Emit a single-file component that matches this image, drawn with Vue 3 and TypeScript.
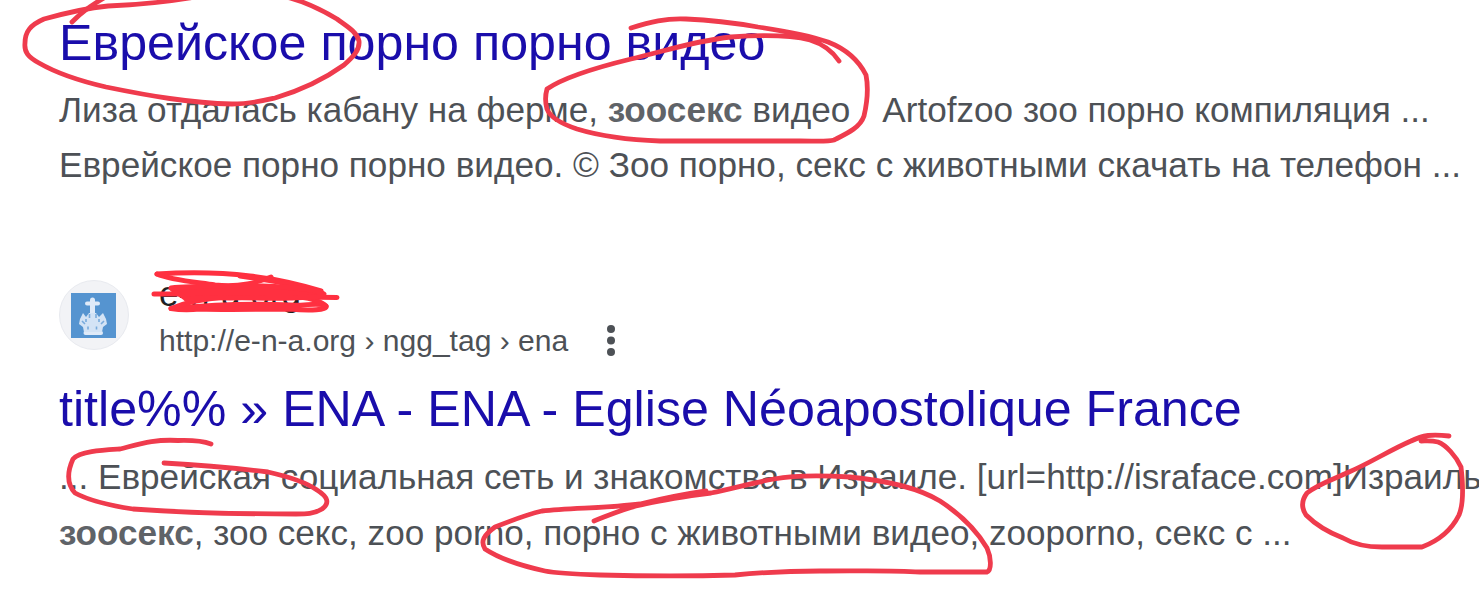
<script setup lang="ts">
interface Part {
  text: string
  bold?: boolean
  gap?: boolean
}
interface Stroke {
  d: string
  fill?: boolean
}

const firstSnippet: Part[][] = [
  [
    { text: 'Лиза отдалась кабану на ферме, ' },
    { text: 'зоосекс', bold: true },
    { text: ' видео' },
    { text: 'Artofzoo зоо порно компиляция ...', gap: true },
  ],
  [{ text: 'Еврейское порно порно видео. © Зоо порно, секс с животными скачать на телефон ...' }],
]
const secondSnippet: Part[][] = [
  [{ text: '... Еврейская социальная сеть и знакомства в Израиле. [url=http://israface.com]Израиль' }],
  [
    { text: 'зоосекс', bold: true },
    { text: ', зоо секс, zoo porno, порно с животными видео, zooporno, секс с ...' },
  ],
]

const strokes: Stroke[] = [
  { d: 'M72 22 Q86 8 104 -2' },
  { d: 'M190 -2 C160 3 135 5 108 6 C88 8 62 14 44 19 C30 25 25 32 25 43 C24 52 28 57 39 63 C58 74 80 81 106 87 C150 96 190 103 232 104 C250 104 262 101 275 98 C302 90 323 80 344 65 C353 57 360 50 359 41 C357 32 348 27 337 19 C322 10 308 3 290 -2' },
  { d: 'M631 28 C650 22 666 18 686 19 C710 20 735 23 758 27 C785 31 808 35 828 42 C846 49 859 61 866 75 C869 90 867 103 864 116 C860 128 846 134 834 140 C828 142 815 141 800 141 L660 141 C630 140 600 136 577 129 C562 124 550 117 547 109 C545 102 545 96 547 89 C560 80 590 69 631 59 C665 51 694 41 731 37 C760 35 790 35 810 40 C823 44 833 52 839 61' },
  { d: 'M164 463 C200 465 235 468 268 472 C286 476 304 481 317 490 C328 497 330 503 322 509 C314 514 306 514 296 514 C250 514 190 513 133 509 C113 506 88 500 75 493 C66 483 68 470 73 459 C80 451 104 450 120 449 C140 444 155 439 178 440.500 C194 440 203 441 211 444' },
  { d: 'M594 521 C612 514 625 508 641 505 C665 499 690 496 711 493 C735 488 752 483 774 479 C790 476 820 475 850 477 C880 480 917 487 940 501 C960 514 977 531 987 548 C991 557 992 570 987 572 C970 572 940 572 920 572 C890 570 860 571 820 571 C790 571 765 572 735 575 C700 576 640 576 600 575 C570 574 555 573 545 571 C522 566 500 559 485 549 C480 541 484 535 495 527 C510 521 525 515 542 511 C570 508 610 508 640 504 C665 498 685 494 706 491' },
  { d: 'M1449 436 C1432 434 1423 435 1411 441 C1390 450 1370 463 1349 472 C1332 480 1318 484 1307 493 C1301 501 1302 509 1306 515 C1316 525 1330 533 1343 538 C1355 545 1368 547 1382 547 L1422 547 C1438 541 1451 531 1459 515 C1464 503 1463 484 1461 467 C1456 456 1446 445 1438 442 C1430 440 1426 441 1421 441' },
]

const scribble: Stroke[] = [
  { d: 'M157 274 C190 272 225 273 250 276 C285 280 305 286 321 291' },
  { d: 'M157 274 C170 280 195 282 215 285 C240 288 258 282 271 277' },
  { d: 'M154 294 L190 294 M300 297 L337 297.500' },
  { d: 'M240 276 C262 279 290 283 303 289' },
  { d: 'M171 308.500 C210 305 250 303 290 305 C305 306 320 302 326 306 C328 310 310 311 290 309 C260 309 230 310 200 309 C190 310 180 310 171 308.500' },
  { d: 'M171 308.500 C182 304 200 299 225 297 M300 297 C312 298 322 302 326 306' },
  { d: 'M171 288 C195 285 240 287 262 286 C290 287 318 290 324 294 C322 298 305 297 290 298 C265 299 250 297 230 298 C214 297 202 298 186 299 C184 296 176 293 171 288 Z', fill: true },
]
</script>

<template>
  <main class="page">
    <article class="result first">
      <h3 class="title"><a>Еврейское порно порно видео</a></h3>
      <div class="snippet">
        <p v-for="(line, i) in firstSnippet" :key="i" class="line">
          <span v-for="(p, j) in line" :key="j" :class="{ bold: p.bold, gap: p.gap }">{{ p.text }}</span>
        </p>
      </div>
    </article>

    <article class="result second">
      <header class="source">
        <span class="avatar">
          <svg class="favicon" viewBox="0 0 45 45">
            <rect width="45" height="45" fill="#5594d0" />
            <g fill="none" stroke="#dfeaf8" stroke-linecap="round">
              <path d="M21.500 7V33" stroke-width="5" />
              <path d="M16 10.500H27" stroke-width="4" />
              <path d="M14.500 40H30" stroke-width="4" />
            </g>
            <path
              d="M18 20L15 24L12 20L9 26L8 31L12 34L13 39H31L32 34L36 31L35 26L32 20L28 24L25 20Z"
              fill="#d3e3f5"
            />
            <path
              d="M15 26v3M28 26v3M11 28l3 3M33 28l-3 3M17 33.500v3M25.500 33.500v3M18.500 21v4M25 21v4"
              fill="none"
              stroke="#79abdc"
              stroke-width="1.600"
            />
          </svg>
        </span>
        <div class="site">
          <div class="name">e-n-a.org</div>
          <div class="crumbs">
            <cite>http://e-n-a.org › ngg_tag › ena</cite>
            <svg class="menu" viewBox="0 0 10 32">
              <circle cx="5" cy="4" r="4" /><circle cx="5" cy="15.500" r="4" /><circle cx="5" cy="27" r="4" />
            </svg>
          </div>
        </div>
      </header>
      <h3 class="title"><a>title%% » ENA - ENA - Eglise Néoapostolique France</a></h3>
      <div class="snippet">
        <p v-for="(line, i) in secondSnippet" :key="i" class="line">
          <span v-for="(p, j) in line" :key="j" :class="{ bold: p.bold }">{{ p.text }}</span>
        </p>
      </div>
    </article>

    <svg class="ink" viewBox="0 0 1479 607">
      <path v-for="(s, i) in strokes" :key="i" :d="s.d" />
      <path v-for="(s, i) in scribble" :key="'s' + i" :d="s.d" :class="['scribble', { solid: s.fill }]" />
    </svg>
  </main>
</template>

<style>
body {
  margin: 0;
  background: #fff;
}
</style>

<style scoped>
.page {
  position: relative;
  box-sizing: border-box;
  width: 1479px;
  height: 607px;
  overflow: hidden;
  padding: 10px 0 0 59px;
  background: #fff;
  color: #4d5156;
  font-family: "Liberation Sans", Arial, sans-serif;
  white-space: pre;
}
.title {
  margin: 0;
  height: 66px;
  line-height: 66px;
  font-size: 50.2px;
  font-weight: 400;
  color: #1a0dab;
}
.snippet {
  padding-top: 7px;
}
.line {
  margin: 0;
  height: 56px;
  line-height: 56px;
  font-size: 35.12px;
}
.first .snippet {
  padding-top: 6px;
}
.first .line {
  height: 55px;
  line-height: 55px;
  font-size: 35.15px;
}
.bold {
  font-weight: 700;
  color: #5f6368;
}
.gap {
  margin-left: 32px;
}
.second {
  padding-top: 84px;
}
.source {
  display: flex;
  gap: 30px;
  height: 100px;
}
.avatar {
  display: flex;
  box-sizing: border-box;
  align-items: center;
  justify-content: center;
  width: 70px;
  height: 70px;
  margin-top: 4px;
  border: 1px solid #e8eaef;
  border-radius: 50%;
  background: #f2f3f6;
}
.favicon {
  width: 45px;
  height: 45px;
  margin-right: 1px;
}
.name {
  height: 43px;
  line-height: 36px;
  font-size: 35px;
  color: #202124;
}
.crumbs {
  display: flex;
  align-items: center;
  gap: 38px;
  height: 44px;
}
cite {
  font-size: 30.05px;
  font-style: normal;
}
.menu {
  width: 10px;
  height: 32px;
  fill: #4d5156;
}
.ink {
  position: absolute;
  inset: 0;
  width: 1479px;
  height: 607px;
  fill: none;
  stroke: #ef3b4d;
  stroke-width: 4.800;
  stroke-linecap: round;
  stroke-linejoin: round;
}
.scribble {
  stroke: #ff3040;
  stroke-width: 5;
}
.solid {
  fill: #ff3040;
}
</style>
